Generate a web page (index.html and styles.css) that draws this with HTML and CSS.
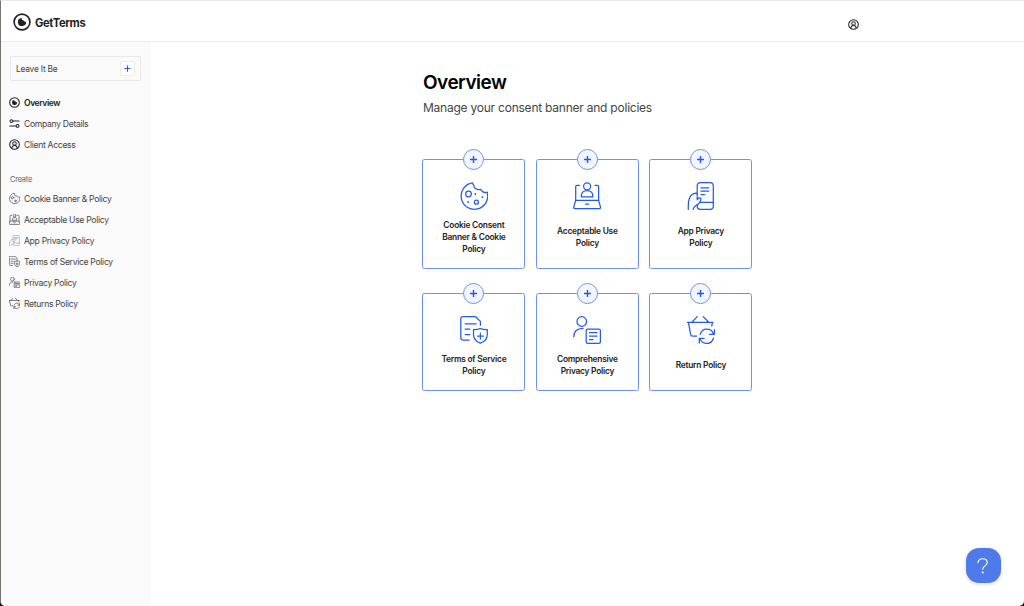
FILE: index.html
```html
<!DOCTYPE html>
<html lang="en">
<head>
    <meta charset="UTF-8">
    <meta name="viewport" content="width=device-width, initial-scale=1.0">
    <title>GetTerms - Overview</title>
    <link rel="stylesheet" href="styles.css">
</head>
<body>
    <!-- shared icons -->
    <svg class="icon-defs" width="0" height="0">
        <symbol id="logo" viewBox="0 0 18 18">
            <circle cx="9" cy="9" r="7.9" />
            <path class="solid" d="M8.6 4.9A4.1 4.1 0 1 0 13.1 8.6A2.4 2.4 0 0 1 10.6 7.4A2.3 2.3 0 0 1 8.6 4.9Z" />
        </symbol>
        <symbol id="user" viewBox="0 0 18 18">
            <circle cx="9" cy="9" r="7.9" />
            <circle cx="9" cy="7.3" r="2.9" />
            <path d="M4.6 14.8C5 11.8 6.7 10.6 9 10.6S13 11.8 13.4 14.8" />
        </symbol>
        <symbol id="sliders" viewBox="0 0 18 18">
            <circle cx="4" cy="5" r="2.3" />
            <path d="M6.5 5H16.5M1.5 13H11.5" />
            <circle cx="14" cy="13" r="2.3" />
        </symbol>
        <symbol id="cookie" viewBox="0 0 28 28">
            <path d="M12.5.8A13.3 13.3 0 1 0 27.2 10.2C24.6 11.2 22 9.8 20.6 7.3C17.2 8.6 13.2 6 14 3.2C13 2.7 12.5 1.8 12.5.8Z" />
            <circle cx="8.5" cy="12" r="2.8" />
            <circle cx="16.4" cy="20.2" r="2" />
            <circle class="dot" cx="15.3" cy="12" r=".9" />
            <circle class="dot" cx="22.4" cy="15.2" r=".9" />
            <circle class="dot" cx="8.1" cy="20" r=".9" />
        </symbol>
        <symbol id="laptop" viewBox="0 0 28 28">
            <path d="M6.5 3.3H4C3 3.3 2.7 3.7 2.7 4.5V18.3M22 3.3H24.3C25.3 3.3 25.6 3.7 25.6 4.5V18.3" />
            <circle cx="14.1" cy="4.3" r="3.5" />
            <path d="M8.3 14.8C8.3 10.8 10.4 8.7 14.1 8.7S19.9 10.8 19.9 14.8Z" />
            <path d="M2.7 18.3H25.6L27.5 25C27.7 26 27.4 26.5 26.4 26.5H1.8C.8 26.5.5 26 .8 25ZM12.5 22.2H15.7" />
        </symbol>
        <symbol id="phone" viewBox="0 0 28 28">
            <path d="M10.2 11.8V4Q10.2.7 13.4.7H23Q26.3.7 26.3 4V24Q26.3 27.3 23 27.3H13.4Q10.2 27.3 10.2 24V22.4" />
            <path d="M14 5.8H21.6M14 9.2H21.6M14 12.6H17.6M12.5 20.4H26.3" />
            <path d="M1.3 27.5V23C1.3 20 1.8 18.4 2.4 16.4C3.4 13 6.2 11.2 10.2 11.2V17.8C11 16.3 12.4 15.2 14 16.7C13.8 20.5 11.8 22 9.4 23.2C6.7 24.6 6.2 25.6 6.2 27.5" />
        </symbol>
        <symbol id="terms" viewBox="0 0 28 28">
            <path d="M9.2 24H3Q.8 24 .8 21.8V2.8Q.8.7 3 .7H15.6L20.4 5.4V9.2M5.2 7.8H16.2M5.2 13.2H9.8M5.2 18.6H9.8" />
            <path d="M20.4 12.5C18.3 13.4 16 13.7 13.5 13.6V18.5C13.5 22.3 16 25.6 20.4 27.2C24.8 25.6 27.3 22.3 27.3 18.5V13.6C24.8 13.7 22.5 13.4 20.4 12.5ZM20.4 17.2V23M17.5 20.1H23.3" />
        </symbol>
        <symbol id="privacy" viewBox="0 0 28 28">
            <circle cx="8.8" cy="5.5" r="4.8" />
            <path d="M.8 20.8C.8 15.4 4.4 12.5 10 12.4" />
            <rect x="13.2" y="13" width="14.2" height="14.3" rx="1.6" />
            <path d="M16.5 16.7H24.1M16.5 20.1H24.1M16.5 23.5H19.9" />
        </symbol>
        <symbol id="basket" viewBox="0 0 28 28">
            <path d="M.5 6.4H26M10.3.6L4.8 6.3M16.2.6L21.7 6.3M1.4 6.4L3.7 18.6Q4 20 5.4 20H9.6M25.4 6.4L24.8 10" />
            <path d="M13.2 18.4C14.2 15 16.8 13.2 19.8 13.2C23 13.2 25.5 15 26.6 18M27.4 13.6V18.3H22.5" />
            <path d="M26.4 22.2C25.4 25.6 22.8 27.4 19.8 27.4C16.6 27.4 14.1 25.6 13 22.6M12.3 27V22.3H17.2" />
        </symbol>
    </svg>

    <header class="topbar">
        <div class="brand">
            <svg class="brand-logo"><use href="#logo" /></svg>
            <span>GetTerms</span>
        </div>
        <svg class="account"><use href="#user" /></svg>
    </header>

    <div class="page">
        <aside class="sidebar">
            <div class="site-select">
                <span>Leave It Be</span>
                <button class="add-site" aria-label="Add site"><svg class="plus" viewBox="0 0 7 7"><path d="M3.5 .8V6.2M.8 3.5H6.2" /></svg></button>
            </div>
            <nav class="menu">
                <a class="active"><svg class="bold-icon"><use href="#logo" /></svg>Overview</a>
                <a><svg class="bold-icon"><use href="#sliders" /></svg>Company Details</a>
                <a><svg class="bold-icon"><use href="#user" /></svg>Client Access</a>
            </nav>
            <div class="menu-title">Create</div>
            <nav class="menu">
                <a><svg><use href="#cookie" /></svg>Cookie Banner &amp; Policy</a>
                <a><svg><use href="#laptop" /></svg>Acceptable Use Policy</a>
                <a><svg class="faded"><use href="#phone" /></svg>App Privacy Policy</a>
                <a><svg><use href="#terms" /></svg>Terms of Service Policy</a>
                <a><svg><use href="#privacy" /></svg>Privacy Policy</a>
                <a><svg><use href="#basket" /></svg>Returns Policy</a>
            </nav>
        </aside>

        <main class="content">
            <h1>Overview</h1>
            <p class="subtitle">Manage your consent banner and policies</p>

            <div class="cards">
                <div class="card tall">
                    <span class="card-add"><svg class="plus" viewBox="0 0 7 7"><path d="M3.5 .3V6.7M.3 3.5H6.7" /></svg></span>
                    <svg class="card-icon"><use href="#cookie" /></svg>
                    <div class="card-title">Cookie Consent<br>Banner &amp; Cookie<br>Policy</div>
                </div>
                <div class="card tall">
                    <span class="card-add"><svg class="plus" viewBox="0 0 7 7"><path d="M3.5 .3V6.7M.3 3.5H6.7" /></svg></span>
                    <svg class="card-icon"><use href="#laptop" /></svg>
                    <div class="card-title">Acceptable Use<br>Policy</div>
                </div>
                <div class="card tall">
                    <span class="card-add"><svg class="plus" viewBox="0 0 7 7"><path d="M3.5 .3V6.7M.3 3.5H6.7" /></svg></span>
                    <svg class="card-icon"><use href="#phone" /></svg>
                    <div class="card-title">App Privacy<br>Policy</div>
                </div>
                <div class="card">
                    <span class="card-add"><svg class="plus" viewBox="0 0 7 7"><path d="M3.5 .3V6.7M.3 3.5H6.7" /></svg></span>
                    <svg class="card-icon"><use href="#terms" /></svg>
                    <div class="card-title">Terms of Service<br>Policy</div>
                </div>
                <div class="card">
                    <span class="card-add"><svg class="plus" viewBox="0 0 7 7"><path d="M3.5 .3V6.7M.3 3.5H6.7" /></svg></span>
                    <svg class="card-icon"><use href="#privacy" /></svg>
                    <div class="card-title">Comprehensive<br>Privacy Policy</div>
                </div>
                <div class="card">
                    <span class="card-add"><svg class="plus" viewBox="0 0 7 7"><path d="M3.5 .3V6.7M.3 3.5H6.7" /></svg></span>
                    <svg class="card-icon"><use href="#basket" /></svg>
                    <div class="card-title">Return Policy</div>
                </div>
            </div>
        </main>
    </div>

    <button class="help" aria-label="Help">
        <svg viewBox="0 0 12 16"><path d="M1 4.6C1 2.3 2.9.8 5.5.8C8.2.8 10.2 2.3 10.2 4.7C10.2 8 5.7 7.8 5.7 11.2" /><circle cx="5.7" cy="14.6" r="1" /></svg>
    </button>
</body>
</html>
```
FILE: styles.css
```css
* {
    box-sizing: border-box;
}

html {
    background: #111;
}

body {
    margin: 0;
    height: 606px;
    overflow: hidden;
    display: flex;
    flex-direction: column;
    font-family: Inter, "Liberation Sans", sans-serif;
    font-size: 8.6px;
    color: #444;
    background: #fff;
    border-left: 1px solid #77746d;
    border-top: 1px solid #e9e7ed;
    border-radius: 0 0 5px 5px;
}

svg {
    display: block;
    fill: none;
    stroke: currentColor;
    stroke-linecap: round;
    stroke-linejoin: round;
}

.icon-defs {
    position: absolute;
}

.solid,
.dot {
    fill: currentColor;
    stroke: none;
}

button {
    padding: 0;
    border: none;
    display: flex;
    align-items: center;
    justify-content: center;
}

.topbar {
    height: 41px;
    flex: none;
    display: flex;
    align-items: center;
    justify-content: space-between;
    padding: 2px 165px 0 12px;
    border-bottom: 1px solid #ececec;
    color: #222;
}

.brand {
    display: flex;
    align-items: center;
    gap: 4px;
    font-size: 11.2px;
    font-weight: 700;
    letter-spacing: -0.35px;
}

.brand span {
    padding-top: 2px;
}

.brand-logo {
    width: 18px;
    height: 18px;
    stroke-width: 1.6;
}

.account {
    width: 11px;
    height: 11px;
    margin-top: 4px;
    stroke-width: 1.7;
}

.page {
    flex: 1;
    display: flex;
}

.sidebar {
    width: 150px;
    flex: none;
    padding: 14px 10px 0 9px;
    background: #fafafa;
}

.site-select {
    height: 25px;
    display: flex;
    align-items: center;
    justify-content: space-between;
    padding: 0 5px;
    border: 1px solid #e9e9e9;
    border-radius: 2px;
    font-size: 8.3px;
    letter-spacing: -0.18px;
}

.add-site {
    width: 15px;
    height: 15px;
    background: #fff;
    border: 1px solid #ececec;
    border-radius: 2px;
}

.plus {
    width: 7px;
    height: 7px;
    color: #2459ee;
    stroke-width: 1.1;
}

.menu {
    display: flex;
    flex-direction: column;
    margin-left: -1px;
}

.site-select + .menu {
    margin-top: 11px;
}

.menu a {
    height: 21px;
    display: flex;
    align-items: center;
    gap: 4px;
    letter-spacing: -0.31px;
    white-space: nowrap;
}

.menu a.active {
    color: #222;
    font-weight: 600;
    letter-spacing: -0.45px;
}

.menu svg {
    width: 11px;
    height: 11px;
    color: #555;
    stroke-width: 1.9;
}

.menu .bold-icon {
    color: #222;
    stroke-width: 1.7;
}

.menu .faded {
    color: #aaa;
}

.menu-title {
    height: 33px;
    padding-top: 20px;
    font-size: 7.5px;
    line-height: 10px;
    letter-spacing: -0.25px;
    color: #666;
}

.content {
    padding: 29px 0 0 271.4px;
}

h1 {
    margin: 0;
    padding-left: 0.6px;
    font-size: 19px;
    line-height: 24px;
    font-weight: 600;
    letter-spacing: -0.5px;
    color: #000;
}

.subtitle {
    margin: 5px 0 0 0.6px;
    font-size: 12px;
    line-height: 16px;
    letter-spacing: -0.23px;
    color: #444;
}

.cards {
    width: 330px;
    margin-top: 43px;
    display: grid;
    grid-template-columns: repeat(3, 103px);
    grid-template-rows: 110px 98px;
    justify-content: space-between;
    row-gap: 24px;
}

.card {
    position: relative;
    display: flex;
    flex-direction: column;
    align-items: center;
    padding-top: 22px;
    border: 1px solid #6c90f6;
    border-radius: 2.5px;
}

.card-add {
    position: absolute;
    top: -11px;
    left: 40px;
    width: 21px;
    height: 21px;
    display: flex;
    align-items: center;
    justify-content: center;
    background: #f3f6ff;
    border: 1px solid #6c90f6;
    border-radius: 50%;
}

.card-add .plus {
    color: #1f57f5;
    stroke-width: 1.4;
}

.card-icon {
    width: 28px;
    height: 28px;
    flex: none;
    color: #2459ee;
    stroke-width: 1.25;
}

.card-title {
    height: 24px;
    margin-top: 10px;
    display: flex;
    align-items: center;
    text-align: center;
    font-size: 8.4px;
    line-height: 11.8px;
    font-weight: 600;
    letter-spacing: -0.24px;
    color: #222;
}

.tall .card-title {
    height: 36px;
}

.help {
    position: absolute;
    right: 23.5px;
    bottom: 23px;
    width: 35px;
    height: 35px;
    color: #fff;
    background: #4f7bea;
    border-radius: 13px;
    box-shadow: 0 1px 4px rgba(0, 0, 0, 0.15);
}

.help svg {
    width: 12px;
    height: 16px;
    stroke-width: 1.1;
}

.help circle {
    fill: #fff;
    stroke: none;
}
```
